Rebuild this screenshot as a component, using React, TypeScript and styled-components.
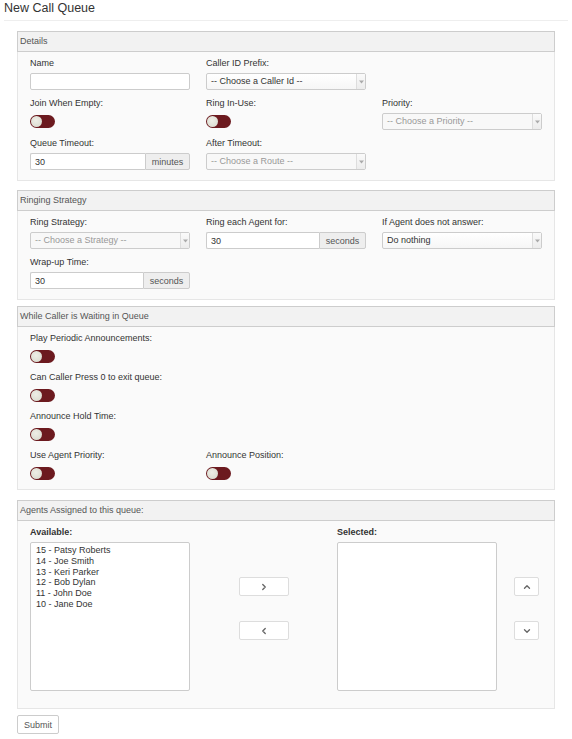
import React from "react";
import styled, { createGlobalStyle } from "styled-components";
import { ChevronRight, ChevronLeft, ChevronUp, ChevronDown } from "lucide-react";

const GlobalStyle = createGlobalStyle`
  * { box-sizing: border-box; }
  body {
    margin: 0;
    background: #fff;
    color: #333;
    font-family: "Liberation Sans", Arial, Helvetica, sans-serif;
  }
`;

const agents = [
  "15 - Patsy Roberts",
  "14 - Joe Smith",
  "13 - Keri Parker",
  "12 - Bob Dylan",
  "11 - John Doe",
  "10 - Jane Doe",
];

const Toggle: React.FC = () => (
  <ToggleCell>
    <Track>
      <Knob />
    </Track>
  </ToggleCell>
);

const FakeSelect: React.FC<{ text: string; disabled?: boolean }> = ({ text, disabled }) => (
  <SelectBox $disabled={disabled}>
    <SelectValue>{text}</SelectValue>
    <SelectArrow>
      <svg width="5" height="4" viewBox="0 0 5 4">
        <path d="M0 0.5 L5 0.5 L2.5 3.5 Z" fill="#aaa" />
      </svg>
    </SelectArrow>
  </SelectBox>
);

const AddonInput: React.FC<{ value: string; unit: string; addonWidth: number }> = ({
  value,
  unit,
  addonWidth,
}) => (
  <InputGroup>
    <GroupInput value={value} readOnly />
    <Addon style={{ width: addonWidth }}>{unit}</Addon>
  </InputGroup>
);

const App: React.FC = () => {
  return (
    <Page>
      <GlobalStyle />
      <Title>New Call Queue</Title>
      <Form onSubmit={(e) => e.preventDefault()}>
        <Panel $after={9}>
          <PanelHeading>Details</PanelHeading>
          <PanelBody>
            <FieldGrid>
              <Field>
                <Label>Name</Label>
                <TextInput />
              </Field>
              <Field>
                <Label>Caller ID Prefix:</Label>
                <FakeSelect text="-- Choose a Caller Id --" />
              </Field>
              <div />
              <Field>
                <Label>Join When Empty:</Label>
                <Toggle />
              </Field>
              <Field>
                <Label>Ring In-Use:</Label>
                <Toggle />
              </Field>
              <Field>
                <Label>Priority:</Label>
                <FakeSelect text="-- Choose a Priority --" disabled />
              </Field>
              <Field>
                <Label>Queue Timeout:</Label>
                <AddonInput value="30" unit="minutes" addonWidth={45} />
              </Field>
              <Field>
                <Label>After Timeout:</Label>
                <FakeSelect text="-- Choose a Route --" disabled />
              </Field>
            </FieldGrid>
          </PanelBody>
        </Panel>

        <Panel $after={6}>
          <PanelHeading>Ringing Strategy</PanelHeading>
          <PanelBody>
            <FieldGrid>
              <Field>
                <Label>Ring Strategy:</Label>
                <FakeSelect text="-- Choose a Strategy --" disabled />
              </Field>
              <Field>
                <Label>Ring each Agent for:</Label>
                <AddonInput value="30" unit="seconds" addonWidth={47} />
              </Field>
              <Field>
                <Label>If Agent does not answer:</Label>
                <FakeSelect text="Do nothing" />
              </Field>
              <Field>
                <Label>Wrap-up Time:</Label>
                <AddonInput value="30" unit="seconds" addonWidth={47} />
              </Field>
            </FieldGrid>
          </PanelBody>
        </Panel>

        <Panel $after={10}>
          <PanelHeading>While Caller is Waiting in Queue</PanelHeading>
          <PanelBody $pb={7}>
            <FieldGrid $rowGap={7}>
              <WideField>
                <Label>Play Periodic Announcements:</Label>
                <Toggle />
              </WideField>
              <WideField>
                <Label>Can Caller Press 0 to exit queue:</Label>
                <Toggle />
              </WideField>
              <WideField>
                <Label>Announce Hold Time:</Label>
                <Toggle />
              </WideField>
              <Field>
                <Label>Use Agent Priority:</Label>
                <Toggle />
              </Field>
              <Field>
                <Label>Announce Position:</Label>
                <Toggle />
              </Field>
            </FieldGrid>
          </PanelBody>
        </Panel>

        <Panel $after={6}>
          <PanelHeading>Agents Assigned to this queue:</PanelHeading>
          <PanelBody $pt={6} $pb={17}>
            <AgentsGrid>
              <Field>
                <Label $bold>Available:</Label>
                <ListBox>
                  {agents.map((a) => (
                    <ListItem key={a}>{a}</ListItem>
                  ))}
                </ListBox>
              </Field>
              <MoveColumn>
                <MoveButton type="button" $w={50}>
                  <ChevronRight size={10} strokeWidth={3.2} />
                </MoveButton>
                <MoveButton type="button" $w={50}>
                  <ChevronLeft size={10} strokeWidth={3.2} />
                </MoveButton>
              </MoveColumn>
              <Field>
                <Label $bold>Selected:</Label>
                <ListBox />
              </Field>
              <MoveColumn $left={17}>
                <MoveButton type="button" $w={25}>
                  <ChevronUp size={10} strokeWidth={3.2} />
                </MoveButton>
                <MoveButton type="button" $w={25}>
                  <ChevronDown size={10} strokeWidth={3.2} />
                </MoveButton>
              </MoveColumn>
            </AgentsGrid>
          </PanelBody>
        </Panel>

        <SubmitButton type="submit">Submit</SubmitButton>
      </Form>
    </Page>
  );
};

const Page = styled.div`
  padding: 0 4px;
  width: 572px;
`;

const Title = styled.h1`
  margin: 0;
  padding: 1px 0 4px;
  font-size: 12.5px;
  line-height: 15px;
  font-weight: normal;
  color: #333;
  border-bottom: 1px solid #eee;
`;

const Form = styled.form`
  padding: 10px 13px 0;
`;

const Panel = styled.section<{ $after: number }>`
  background: #fafafa;
  border: 1px solid #e6e6e6;
  margin-bottom: ${(p) => p.$after}px;
`;

const PanelHeading = styled.div`
  margin: -1px -1px 0;
  height: 21px;
  border: 1px solid #cdcdcd;
  background: #f2f2f2;
  padding-left: 2px;
  font-size: 9px;
  line-height: 19px;
  color: #555;
`;

const PanelBody = styled.div<{ $pt?: number; $pb?: number }>`
  padding: ${(p) => p.$pt ?? 6}px 11px ${(p) => p.$pb ?? 10}px 12px;
`;

const FieldGrid = styled.div<{ $rowGap?: number }>`
  display: grid;
  grid-template-columns: repeat(3, 160px);
  column-gap: 16px;
  row-gap: ${(p) => p.$rowGap ?? 8}px;
`;

const Field = styled.div`
  display: flex;
  flex-direction: column;
`;

const WideField = styled(Field)`
  grid-column: 1 / -1;
`;

const Label = styled.label<{ $bold?: boolean }>`
  display: block;
  font-size: 9px;
  line-height: 11px;
  margin-bottom: 4px;
  color: #333;
  font-weight: ${(p) => (p.$bold ? "bold" : "normal")};
  white-space: nowrap;
`;

const TextInput = styled.input`
  height: 17px;
  width: 100%;
  border: 1px solid #ccc;
  border-radius: 2px;
  background: #fff;
  padding: 0 4px;
  font-family: inherit;
  font-size: 9px;
  color: #333;
  outline: none;
`;

const InputGroup = styled.div`
  display: flex;
  height: 17px;
`;

const GroupInput = styled(TextInput)`
  flex: 1;
  min-width: 0;
  border-radius: 2px 0 0 2px;
  border-right: none;
`;

const Addon = styled.span`
  display: flex;
  align-items: center;
  justify-content: center;
  border: 1px solid #ccc;
  border-radius: 0 2px 2px 0;
  background: #eee;
  font-size: 9px;
  color: #555;
`;

const SelectBox = styled.div<{ $disabled?: boolean }>`
  display: flex;
  height: 17px;
  border: 1px solid #ccc;
  border-radius: 2px;
  background: ${(p) => (p.$disabled ? "#f8f8f8" : "linear-gradient(#fff, #f6f6f6)")};
  color: ${(p) => (p.$disabled ? "#999" : "#333")};
  font-size: 9px;
`;

const SelectValue = styled.span`
  flex: 1;
  padding-left: 4px;
  line-height: 15px;
  white-space: nowrap;
  overflow: hidden;
`;

const SelectArrow = styled.span`
  width: 9px;
  display: flex;
  align-items: center;
  justify-content: center;
  border-left: 1px solid #ddd;
  background: linear-gradient(#fafafa, #ececec);
`;

const ToggleCell = styled.div`
  height: 17px;
  display: flex;
  align-items: center;
`;

const Track = styled.div`
  width: 25px;
  height: 13px;
  border-radius: 7px;
  background: #6c1a1f;
  padding: 1px;
  display: flex;
  align-items: center;
`;

const Knob = styled.span`
  width: 11px;
  height: 11px;
  border-radius: 50%;
  background: radial-gradient(circle at 45% 40%, #eeeee6, #d6d7cb);
`;

const AgentsGrid = styled.div`
  display: grid;
  grid-template-columns: 160px 147px 160px auto;
`;

const ListBox = styled.div`
  height: 149px;
  border: 1px solid #ccc;
  border-radius: 2px;
  background: #fff;
  padding: 2px 5px;
`;

const ListItem = styled.div`
  font-size: 9px;
  line-height: 10.8px;
  color: #333;
  white-space: nowrap;
`;

const MoveColumn = styled.div<{ $left?: number }>`
  display: flex;
  flex-direction: column;
  align-items: ${(p) => (p.$left ? "flex-start" : "center")};
  gap: 25px;
  padding-top: 50px;
  padding-left: ${(p) => p.$left ?? 0}px;
`;

const MoveButton = styled.button<{ $w: number }>`
  width: ${(p) => p.$w}px;
  height: 19px;
  display: flex;
  align-items: center;
  justify-content: center;
  border: 1px solid #ddd;
  border-radius: 2px;
  background: #fff;
  color: #666;
  padding: 0;
`;

const SubmitButton = styled.button`
  display: block;
  width: 42px;
  height: 19px;
  border: 1px solid #ccc;
  border-radius: 2px;
  background: #fff;
  font-family: inherit;
  font-size: 9px;
  color: #555;
  padding: 0;
`;

export default App;
